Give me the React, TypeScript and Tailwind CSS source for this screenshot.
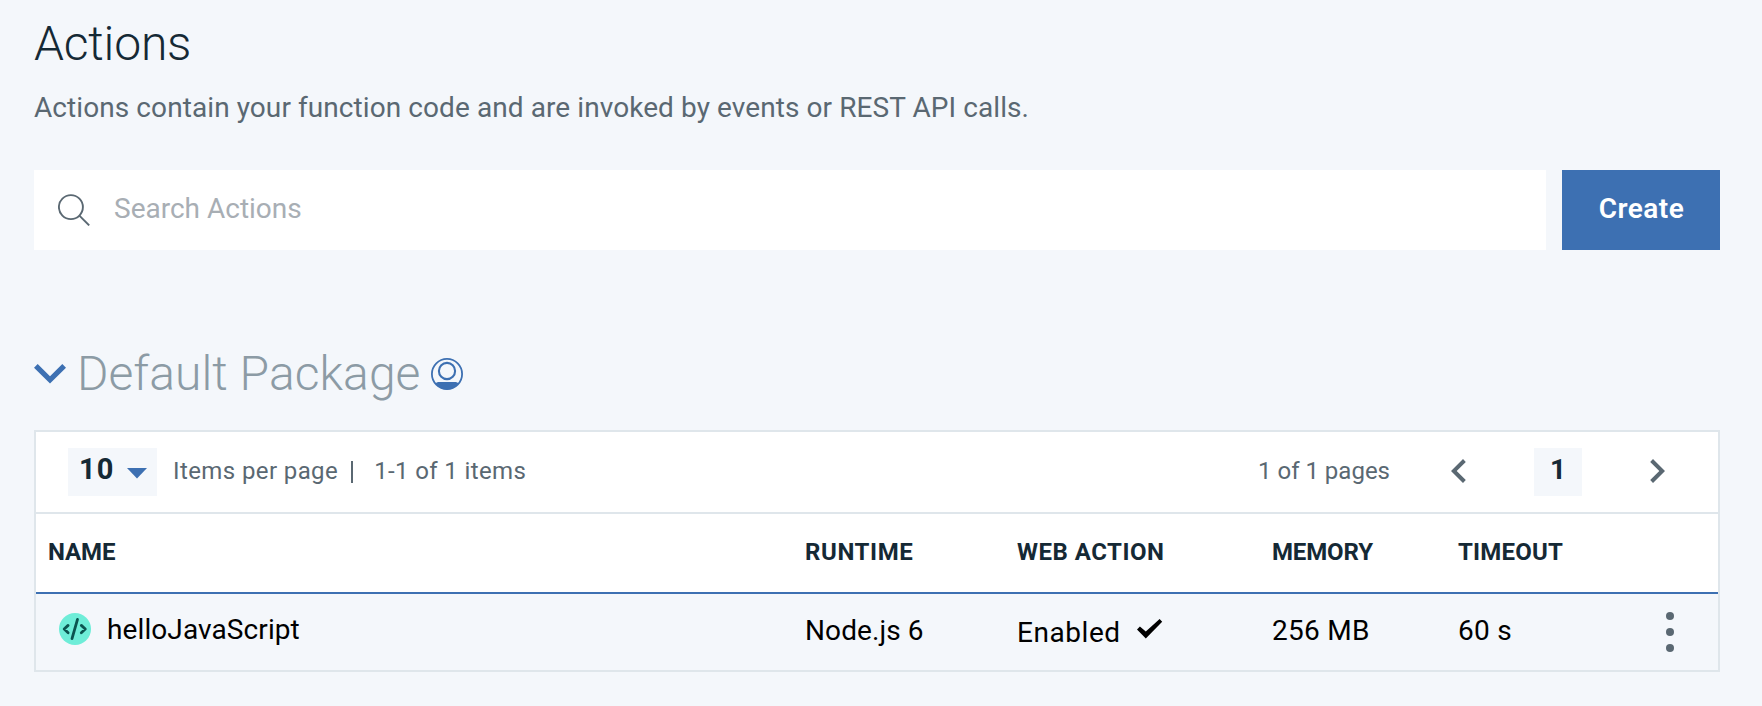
const columns = "grid grid-cols-[757px_212px_255px_186px_1fr] pl-3";

function SearchIcon() {
  return (
    <svg width="32" height="32" viewBox="0 0 32 32" fill="none" stroke="#5a6872" strokeWidth="1.9">
      <circle cx="12.9" cy="13.1" r="12" />
      <path d="M21.4 21.6 31.2 31.4" />
    </svg>
  );
}

function ExpandIcon() {
  return (
    <svg width="32" height="20" viewBox="0 0 32 20" fill="#3d70b2">
      <path d="M0 3.7 3.7 0 16 12.2 28.3 0 32 3.7 16 19.6z" />
    </svg>
  );
}

function UserIcon() {
  return (
    <svg width="32" height="32" viewBox="0 0 32 32" fill="none" stroke="#3d70b2">
      <circle cx="16" cy="16" r="15.1" strokeWidth="1.8" />
      <circle cx="16" cy="13" r="8.1" strokeWidth="2.1" />
      <path d="M4.2 25.2 7 24h18l2.8 1.2A15.6 15.6 0 0 1 16 31.4 15.6 15.6 0 0 1 4.2 25.2z" fill="#3d70b2" stroke="none" />
    </svg>
  );
}

function ChevronIcon({ flip }: { flip?: boolean }) {
  return (
    <svg width="15" height="24" viewBox="0 0 15 24" fill="#5a6872" className={flip ? "rotate-180" : ""}>
      <path d="M12 0 14.8 2.9 5.7 12l9.1 9.1L12 24 0 12z" />
    </svg>
  );
}

function CodeIcon() {
  return (
    <svg width="32" height="32" viewBox="0 0 32 32" fill="none" stroke="#0b5450" strokeLinecap="round" strokeLinejoin="round">
      <circle cx="16" cy="16" r="16" fill="#6eedd8" stroke="none" />
      <path d="M18.5 6.4 13 25.6" strokeWidth="2.8" />
      <path d="M9.1 12.4 5.2 16l3.9 3.7M22.3 12.4l4 3.6-4 3.7" strokeWidth="2.8" />
    </svg>
  );
}

function CheckIcon() {
  return (
    <svg width="26" height="20" viewBox="0 0 26 20" fill="#000">
      <path d="M0 10.5 2.9 7.6 8.8 12.6 22.6 0 25.2 2.8 8.8 19.5z" />
    </svg>
  );
}

function MenuIcon() {
  return (
    <svg width="8" height="40" viewBox="0 0 8 40" fill="#5a6872">
      <circle cx="4" cy="4" r="4" />
      <circle cx="4" cy="20" r="4" />
      <circle cx="4" cy="36" r="4" />
    </svg>
  );
}

export default function App() {
  return (
    <main className="h-[706px] w-[1762px] bg-[#f4f7fb] pt-4 pr-[42px] pl-[34px] font-[Roboto,sans-serif] text-[28px] leading-10 text-[#5a6872]">
      <h1 className="text-[48px] leading-14 font-light tracking-[-0.2px] text-[#152935]">Actions</h1>
      <p className="mt-4 tracking-[0.08px]">
        Actions contain your function code and are invoked by events or REST API calls.
      </p>

      <div className="mt-[42px] flex h-20 gap-4">
        <div className="flex flex-1 items-center bg-white pl-6">
          <SearchIcon />
          <span className="ml-6 pb-[3px] text-[#a8aeb4]">Search Actions</span>
        </div>
        <button className="flex w-[158px] items-center justify-center bg-[#3d70b2] pb-[3px] pl-[1px] font-semibold tracking-[0.5px] text-white">
          Create
        </button>
      </div>

      <div className="mt-24 flex h-14 items-center">
        <ExpandIcon />
        <h2 className="ml-[11px] text-[48px] leading-14 font-light tracking-[0.05px] text-[#8c9ba5]">Default Package</h2>
        <span className="ml-[11px]">
          <UserIcon />
        </span>
      </div>

      <section className="mt-7 h-[242px] border-2 border-[#dfe6eb] bg-white">
        <div className="flex h-[82px] items-center justify-between border-b-2 border-[#dfe6eb] pr-[53px] pl-8 text-2xl">
          <div className="flex items-center">
            <div className="flex h-12 w-[89px] items-center bg-[#f4f7fb] pl-[11px]">
              <span className="pb-[5px] text-[29px] font-bold tracking-[1px] text-[#152935]">10</span>
              <svg width="20" height="11" viewBox="0 0 20 11" fill="#3d70b2" className="mt-[3px] ml-[13px]">
                <path d="M0 0h20L10 10.5z" />
              </svg>
            </div>
            <span className="ml-4 pb-[2px] tracking-[0.4px]">Items per page</span>
            <span className="ml-[13px] h-[22px] w-[2px] bg-[#5a6872]" />
            <span className="ml-[21px] pb-[2px] tracking-[0.38px]">1-1 of 1 items</span>
          </div>
          <div className="flex items-center">
            <span className="pb-[2px]">1 of 1 pages</span>
            <span className="ml-[61px] flex pb-[3px]">
              <ChevronIcon />
            </span>
            <span className="ml-[68px] flex h-12 w-12 items-center justify-center bg-[#f4f7fb] pb-1 text-[28px] font-bold text-[#152935]">
              1
            </span>
            <span className="ml-[68px] flex pb-[3px]">
              <ChevronIcon flip />
            </span>
          </div>
        </div>

        <div className={`${columns} h-20 items-center border-b-2 border-[#3d70b2] pb-[2px] text-2xl font-bold text-[#152935]`}>
          <span className="tracking-[-0.1px]">NAME</span>
          <span className="tracking-[0.6px]">RUNTIME</span>
          <span className="tracking-[0.5px]">WEB ACTION</span>
          <span className="tracking-[-0.15px]">MEMORY</span>
          <span className="tracking-[0.2px]">TIMEOUT</span>
        </div>

        <div className={`${columns} h-[76px] items-center bg-[#f4f7fb] text-black`}>
          <div className="flex items-center pb-[6px] pl-[11px]">
            <CodeIcon />
            <span className="ml-4 pt-[2px] tracking-[0.1px]">helloJavaScript</span>
          </div>
          <span className="pb-[3px] tracking-[0.1px]">Node.js 6</span>
          <div className="flex items-center">
            <span className="pt-px tracking-[0.55px]">Enabled</span>
            <span className="ml-4 flex pb-[6px]">
              <CheckIcon />
            </span>
          </div>
          <span className="pb-[3px] tracking-[0.3px]">256 MB</span>
          <div className="flex items-center justify-between pr-[44px]">
            <span className="pb-[3px] tracking-[0.3px]">60 s</span>
            <MenuIcon />
          </div>
        </div>
      </section>
    </main>
  );
}
